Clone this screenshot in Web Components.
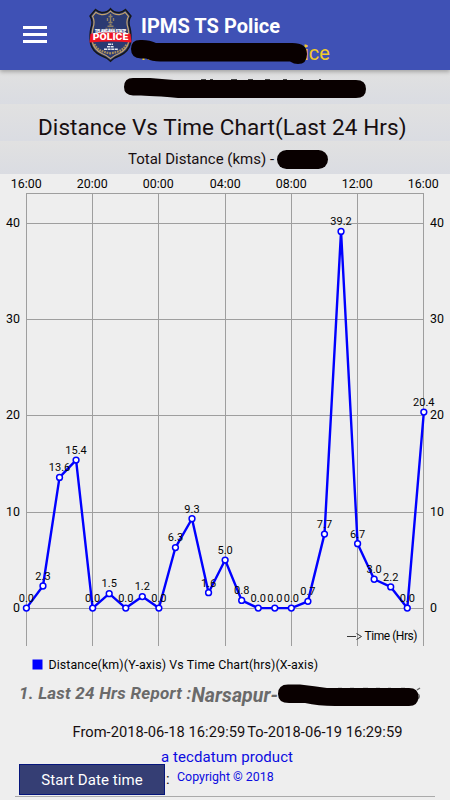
<!DOCTYPE html>
<html lang="en">
<head>
<meta charset="utf-8">
<meta name="viewport" content="width=device-width, initial-scale=1">
<title>IPMS TS Police</title>
<style>
html, body { margin: 0; height: 100%; }
body { background: #eee; color: #170e10; font-family: Roboto, sans-serif; overflow: hidden; }
</style>
</head>
<body>
<police-report></police-report>

<script>
const define = (name, html, init = () => {}) => {
  const template = document.createElement('template');
  template.innerHTML = html;
  customElements.define(name, class extends HTMLElement {
    constructor() {
      super();
      this.attachShadow({ mode: 'open' });
      this.shadowRoot.append(template.content.cloneNode(true));
    }

    connectedCallback() {
      init(this);
    }
  });
};

define('police-badge', `
<style>
:host { display: block; width: 43px; height: 54px; }
svg { display: block; overflow: visible; }
</style>
<svg width="43" height="54" viewBox="0 0 43 54">
  <path d="M21.500.7Q18 5 12.500 4.500Q9 4 6.500 1.500L1 8Q4.500 13 2 20Q.5 26 1.500 35Q3 43 12 47.500Q18 49.500 21.500 53.300Q25 49.500 31 47.500Q40 43 41.500 35Q42.500 26 41 20Q38.500 13 42 8L36.500 1.500Q34 4 30.500 4.500Q25 5 21.500.7Z" fill="#2b3a72" stroke="#151719" stroke-width="1.400"/>
  <path d="M21.500 3.200Q18 7 12.500 6.600Q9 6.200 6.800 4.300L3.500 8.300Q6.300 13.500 4 20Q2.500 26 3.500 34.500Q5 41.500 13 45.500Q18 47.500 21.500 50.600Q25 47.500 30 45.500Q38 41.500 39.500 34.500Q40.500 26 39 20Q36.700 13.500 39.500 8.300L36.200 4.300Q34 6.200 30.500 6.600Q25 7 21.500 3.200Z" fill="none" stroke="#c3a36d" stroke-width="1.200"/>
  <path d="M21.500 6v2M19.500 8.500h4M18.500 10v3M24.500 10v3M21.500 9v5M19.500 14.500h4M20.500 16.500h2M18.500 18.300h6" fill="none" stroke="#8f8166" stroke-width="1.400"/>
  <path d="M16.500 20.300h10" stroke="#8b806f" stroke-dasharray="2 1"/>
  <text x="21.500" y="24.600" text-anchor="middle" fill="#fff" stroke="#fff" stroke-width=".2" font-size="4.600" font-weight="900" textLength="31" lengthAdjust="spacingAndGlyphs">TELANGANA STATE</text>
  <path d="M1.500 25.700Q21.500 23.300 41.500 25.700L42.500 34.500Q21.500 32.500.5 34.500Z" fill="#f01522"/>
  <text x="21.500" y="32.300" text-anchor="middle" fill="#fff" font-size="8.600" font-weight="900" textLength="35.500" lengthAdjust="spacingAndGlyphs">POLICE</text>
  <path d="M19 36.300h5M18 38.800h7M15 41.300h14" stroke="#e7e9ef" stroke-width="1.500" stroke-dasharray="3 .6"/>
  <path d="M5.500 36Q8 43.500 21.500 45.300Q35 43.500 37.500 36" fill="none" stroke="#a98d5a" stroke-width="2.300" stroke-dasharray="1.800 .8"/>
</svg>
`);

define('app-header', `
<style>
:host { display: flex; position: relative; z-index: 1; box-sizing: border-box; height: 70px; padding-left: 23px; background: #3f51b5; color: #fff; box-shadow: 0 2px 4px #0004; }
.menu { width: 24px; height: 17px; margin-top: 26px; display: flex; flex-direction: column; justify-content: space-between; }
.menu i { height: 3px; background: #fff; }
police-badge { margin: 8px 0 0 42px; }
.titles { margin: 14px 0 0 9px; }
h1 { margin: 0; font-size: 20px; line-height: 24px; font-weight: 700; letter-spacing: .05px; white-space: nowrap; }
p { margin: 3px 0 0 163px; color: #f4cb28; font-size: 20px; line-height: 25px; }
.mark { position: absolute; left: 0; top: 0; }
</style>
<div class="menu"><i></i><i></i><i></i></div>
<police-badge></police-badge>
<div class="titles">
  <h1>IPMS TS Police</h1>
  <p>ice</p>
</div>
<svg class="mark" width="450" height="70">
  <path d="M142.500 59h2M148 59h2M299.500 44.500v3M305.500 44.500v3" stroke="#f4cb28" stroke-width="2"/>
  <path d="M131 49Q131 40 140 40Q149 39.500 156 43H291Q307 42.500 307 54Q307 64 298 64Q294 64 290 61.500H160Q152 61.500 146 58.500H141Q131 58 131 49Z" fill="#090000"/>
</svg>
`);

define('band-row', `
<style>
:host { display: flex; align-items: center; box-sizing: border-box; background: linear-gradient(#e1e1e1, #dadce2); white-space: nowrap; }
</style>
<slot></slot>
`);

define('distance-chart', `
<style>
:host { display: block; }
svg { display: block; }
text { fill: #050505; font-family: Roboto, sans-serif; }
.axis { font-size: 12.400px; }
.value { font-size: 11px; }
.grid { stroke: #9e9e9e; fill: none; }
.line { stroke: #00f; stroke-width: 2.400; fill: none; stroke-linejoin: round; }
circle { fill: #fff; stroke: #00f; stroke-width: 1.500; }
</style>
<svg width="450" height="505" viewBox="0 174 450 505"></svg>
`, host => {
  const values = host.getAttribute('values').split(',');
  const hours = host.getAttribute('hours').split(',');
  const px = i => 26.4 + i * 16.56;
  const py = v => 608.1 - v * 9.61;
  const text = (x, y, s, cls, anchor = 'middle') =>
    `<text class="${cls}" x="${x}" y="${y}" text-anchor="${anchor}">${s}</text>`;

  const columns = hours.map((h, i) => {
    const x = Math.floor(px(i * 4)) + .5;
    return `<path class="grid" d="M${x} 193V646"/>` + text(x - .3, 188.3, h, 'axis');
  });
  const rows = [0, 10, 20, 30, 40].map(v => {
    const y = Math.floor(py(v)) + .5;
    return `<path class="grid" d="M26 ${y}H424"/>` +
      text(20, y + 3.5, v, 'axis', 'end') + text(430, y + 3.5, v, 'axis', 'start');
  });
  const points = values.map((v, i) => `${px(i)},${py(v)}`).join(' ');
  const dots = values.map((v, i) => `<circle cx="${px(i)}" cy="${py(v)}" r="2.900"/>`);
  const labels = values.map((v, i) => text(px(i), py(v) - 6.2, v, 'value'));

  host.shadowRoot.querySelector('svg').innerHTML = `
    <path class="grid" d="M26 193.500H424"/>
    ${columns.join('')}${rows.join('')}
    <polyline class="line" points="${points}"/>
    ${labels.join('')}${dots.join('')}
    <path d="M347 636.500h9M356.500 633.500l5 3l-5 3" fill="none" stroke="#222" stroke-width=".9"/>
    <text x="364.500" y="640" font-size="12" textLength="53">Time (Hrs)</text>
    <rect x="32.500" y="659.500" width="10" height="10" fill="#00f"/>
    <text x="48.500" y="669" font-size="12.400" textLength="269.500">${host.getAttribute('legend')}</text>`;
});

define('report-details', `
<style>
:host { display: block; position: relative; }
.heading { display: flex; height: 39px; padding-left: 19px; align-items: flex-start; color: #6a6a6a; font-style: italic; font-weight: 700; white-space: nowrap; }
.report { font-size: 17px; line-height: 20px; margin-top: 4px; letter-spacing: .24px; }
.place { font-size: 19.500px; line-height: 23px; margin-top: 5px; letter-spacing: .1px; }
.dates { display: flex; gap: 2px; height: 28px; padding-left: 72.500px; align-items: center; font-size: 14.700px; letter-spacing: .01px; white-space: nowrap; }
.product { height: 18px; line-height: 22px; padding-left: 161px; color: #0c0ce0; font-size: 15px; letter-spacing: .08px; }
.action { display: flex; height: 32px; }
button { box-sizing: border-box; width: 146px; height: 31px; margin: 0 0 0 19px; padding: 0; border: 1px solid #06167b; background: #353e74; color: #fff; font: 400 15px Roboto, sans-serif; letter-spacing: .08px; }
.colon { width: 4px; margin: 7px 7px 0 0; padding-left: 1px; font-size: 15px; line-height: 17px; }
.copyright { color: #0c0ce0; font-size: 12.400px; line-height: 26px; }
hr { margin: 0 15px; height: 1px; border: 0; background: #aaa; }
.mark { position: absolute; left: 0; top: 0; }
</style>
<div class="heading"><span class="report">1. Last 24 Hrs Report :</span><span class="place">Narsapur-</span></div>
<div class="dates"><span>From-2018-06-18 16:29:59</span><span>To-2018-06-19 16:29:59</span></div>
<div class="product">a tecdatum product</div>
<div class="action"><button>Start Date time</button><span class="colon">:</span><span class="copyright">Copyright © 2018</span></div>
<hr>
<svg class="mark" width="450" height="36">
  <path d="M338 9.500h4M350 9.500h4M363 9.500h5M376 9.500h4M388 9.500h3M401 9.500h4M417 11l3-2M418 15q2.500 2 0 5" stroke="#6a6a6a" stroke-width="1.500" fill="none"/>
  <path d="M278 15Q278 5.500 288 5.500H300Q315 7 327 9H409Q418.500 9 418.500 18Q418 27 409 27H335Q318 27 305 24H289Q278 24 278 15Z" fill="#090000"/>
</svg>
`);

define('police-report', `
<style>
:host { display: flex; flex-direction: column; width: 450px; height: 800px; overflow: hidden; }
band-row { width: 450px; flex: none; }
.vehicle { height: 34px; padding-left: 123px; }
.title { height: 37px; padding: 0 0 2px 38px; align-items: flex-end; font-size: 22.500px; line-height: 24px; letter-spacing: .08px; }
.total { height: 33px; padding: 2px 0 0 128px; font-size: 15px; gap: 3px; }
distance-chart { height: 505px; flex: none; }
</style>
<app-header></app-header>
<band-row class="vehicle"><svg width="245" height="24">
  <path d="M78 5h5M87 5h3M108 5h6M125 5h5M142 5h5M160 5h4M177 5h3M196 5h2" stroke="#111" stroke-width="1.500"/>
  <path d="M1 12Q1 3 10 3H27L51 5H233Q243 5 243 14Q243 23 233 23H55Q48 22 38 21.500Q25 21 18 20.500H10Q1 20 1 12Z" fill="#090000"/>
</svg></band-row>
<band-row class="title">Distance Vs Time Chart(Last 24 Hrs)</band-row>
<band-row class="total"><span>Total Distance (kms) -</span><svg width="52" height="20"><rect width="51" height="19" y="1" rx="9.500" fill="#090000"/></svg></band-row>
<distance-chart
  hours="16:00,20:00,00:00,04:00,08:00,12:00,16:00"
  values="0.0,2.3,13.6,15.4,0.0,1.5,0.0,1.2,0.0,6.3,9.3,1.6,5.0,0.8,0.0,0.0,0.0,0.7,7.7,39.2,6.7,3.0,2.2,0.0,20.4"
  legend="Distance(km)(Y-axis) Vs Time Chart(hrs)(X-axis)"></distance-chart>
<report-details></report-details>
`);
</script>
</body>
</html>
